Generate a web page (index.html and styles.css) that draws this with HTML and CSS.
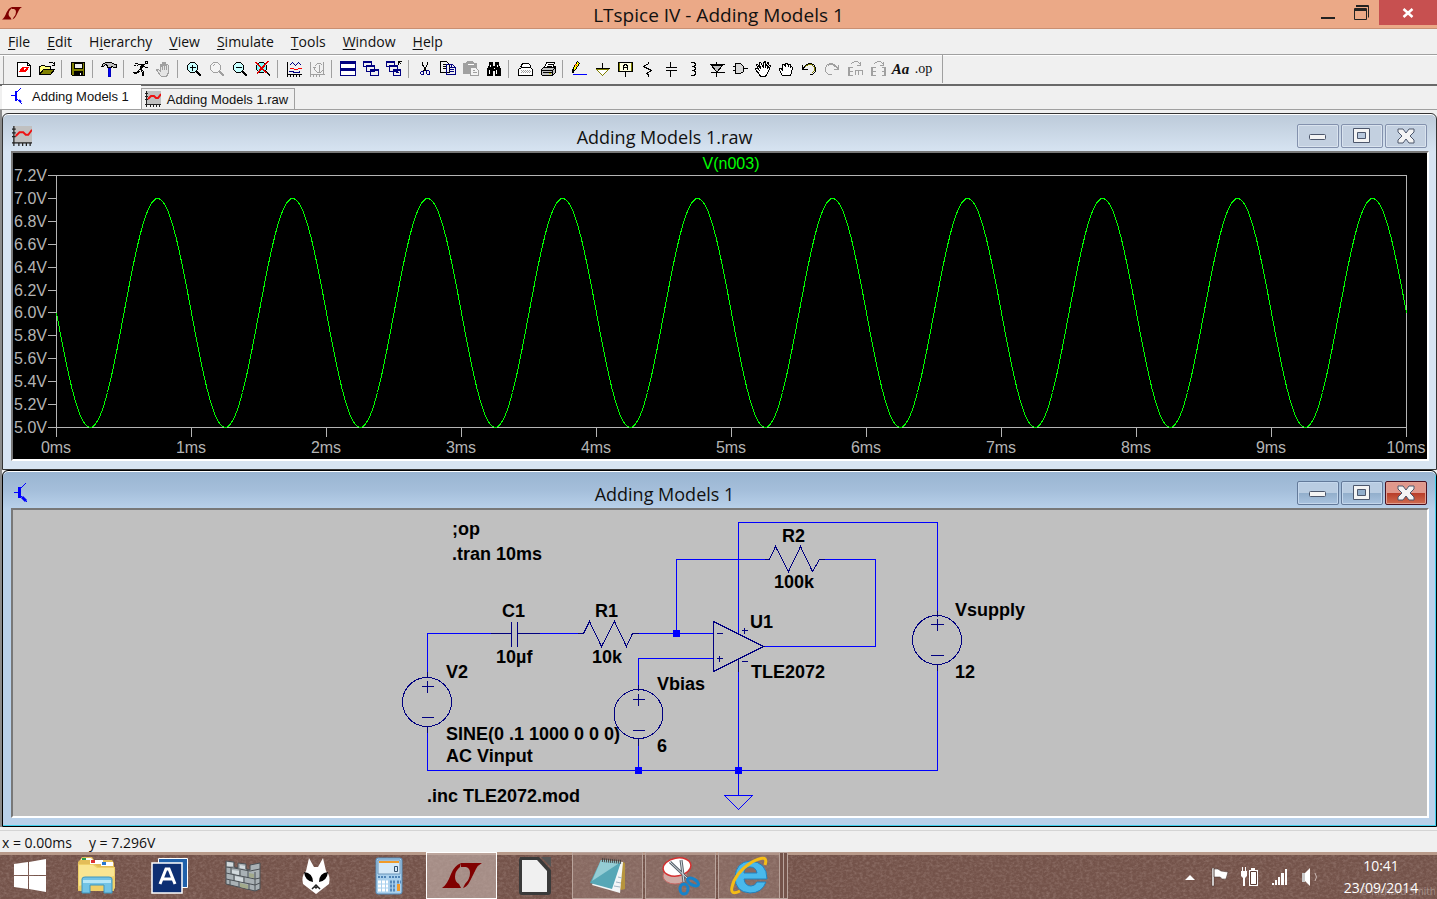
FILE: index.html
```
<!DOCTYPE html>
<html lang="en">

<head>
    <meta charset="UTF-8">
    <meta name="viewport" content="width=device-width, initial-scale=1.0">
    <title>LTspice IV - Adding Models 1</title>
    <link rel="stylesheet" href="styles.css">
</head>

<body>
    <header class="titlebar">
        <svg class="app-logo" width="20" height="13" viewBox="0 0 40 26" fill="#800000">
            <path d="M0 25Q5 22 9 11Q12 3 19 0L18 4Q13 8 13 14Q13 19 17 21L19 25ZM19 0H40Q36 2 34 6L28 18Q25 24 21 25L23 21Q28 16 28 10Q28 5 24 4L19 4Z" />
        </svg>
        <h1>LTspice IV - Adding Models 1</h1>
        <div class="title-buttons">
            <button aria-label="Minimize"><svg width="16" height="16" viewBox="0 0 16 16"><path d="M1 12h14v2H1z" fill="#222" /></svg></button>
            <button aria-label="Restore"><svg width="16" height="16" viewBox="0 0 16 16" fill="none" stroke="#222"><path d="M.5 3.500h12v11H.5zM.5 4.500h12M.5 5.500h12M2 .5h12.500v12M2 1.500h12" /></svg></button>
            <button class="close" aria-label="Close"><svg width="12" height="10" viewBox="0 0 12 10" stroke="#fff" stroke-width="2.500"><path d="M1.500 1l9 8M10.500 1l-9 8" /></svg></button>
        </div>
    </header>

    <nav class="menubar">
        <button><u>F</u>ile</button>
        <button><u>E</u>dit</button>
        <button>H<u>i</u>erarchy</button>
        <button><u>V</u>iew</button>
        <button><u>S</u>imulate</button>
        <button><u>T</u>ools</button>
        <button><u>W</u>indow</button>
        <button><u>H</u>elp</button>
    </nav>

    <div class="toolbar">
        <button aria-label="New schematic"><svg class="icon" viewBox="-.5 -.5 16 16"><path d="M1 1h10l3 3v11H1z" fill="#fff" stroke="#000" /><path d="M11 1v3h3" stroke="#000" /><path d="M3 10l3-4h2l-2 3h1l-1 1zM9 6h3l-3 4H7l2-1l1-2z" fill="#f00" stroke="#f00" /></svg></button>
        <button aria-label="Open"><svg class="icon" viewBox="-.5 -.5 16 16"><path d="M0 13V5h1l1-1h3l1 1h5v3" fill="#ffff80" stroke="#000" /><path d="M0 13l4-5h11l-4 5z" fill="#808000" stroke="#000" /><path d="M9 2l1-1h3l2 2M15 0v4h-3" stroke="#000" /></svg></button>
        <span class="sep"></span>
        <button aria-label="Save"><svg class="icon" viewBox="-.5 -.5 16 16"><path d="M1 1h13v13H2l-1-1z" fill="#808000" stroke="#000" /><path d="M4 2h8v5H4z" fill="#efefef" stroke="#000" /><path d="M4 10h8v4H4z" fill="#000" stroke="#000" /><path d="M10 11v2" stroke="#fff" /></svg></button>
        <span class="sep"></span>
        <button aria-label="Control panel"><svg class="icon" viewBox="-.5 -.5 16 16"><path d="M0 5l2-3l3-1h5l3 2h2v3h-3l-1-1h-1v1H6V4L4 3L2 5z" fill="#c0c0c0" stroke="#000" /><path d="M7 7h2v8H7z" fill="#00f" stroke="#0000c0" /></svg></button>
        <span class="sep"></span>
        <button aria-label="Run"><svg class="icon" viewBox="-.5 -.5 16 16" stroke="#000"><path d="M13 0h2v2h-2zM12 3L8 8M11 3L7 8M10 3L7 6M10 3H6L4 5M12 5l1 1h2M9 8l2 2v3l-1 2M8 8l2 3v3M7 8l-3 3H0M8 9l-4 3H1M2 2h3M1 4h2" /></svg></button>
        <button aria-label="Halt"><svg class="icon" viewBox="-.5 -.5 16 16" stroke="#a0a0a0"><path d="M5 14l-3-4l-1-2h2l2 2V3h1l1 5V1h1l1 7V1h1l1 7V3h1l1 1v7l-2 4H6z" fill="#e4e4e4" /></svg></button>
        <span class="sep"></span>
        <button aria-label="Zoom in"><svg class="icon" viewBox="-.5 -.5 16 16"><path d="M4 1h4l3 3v4l-3 3H4L1 8V4z" fill="#c8ffff" stroke="#000" /><path d="M3 6h6M6 3v6M10 10l5 5M11 10l4 4M10 11l4 4" stroke="#000" /></svg></button>
        <button aria-label="Pan"><svg class="icon" viewBox="-.5 -.5 16 16" stroke="#a0a0a0"><path d="M4 1h4l3 3v4l-3 3H4L1 8V4z" fill="#f4f4f4" /><path d="M3 5l2-2M10 10l5 5M11 10l4 4M10 11l4 4" /></svg></button>
        <button aria-label="Zoom out"><svg class="icon" viewBox="-.5 -.5 16 16"><path d="M4 1h4l3 3v4l-3 3H4L1 8V4z" fill="#c8ffff" stroke="#000" /><path d="M3 6h6M10 10l5 5M11 10l4 4M10 11l4 4" stroke="#000" /></svg></button>
        <button aria-label="Zoom to fit"><svg class="icon" viewBox="-.5 -.5 16 16"><path d="M4 1h4l3 3v4l-3 3H4L1 8V4z" fill="#80ffff" stroke="#000" /><path d="M10 10l5 5M11 10l4 4" stroke="#000" /><path d="M0 1l11 11M1 1l11 11M12 0L1 12M13 0L1 13" stroke="#e00000" /></svg></button>
        <span class="sep"></span>
        <button aria-label="Autorange"><svg class="icon" viewBox="-.5 -.5 16 16"><path d="M1 0v15M0 3h1M0 6h1M0 9h1M0 13h15M4 13v2M7 13v2M10 13v2M13 13v2" stroke="#000" /><path d="M3 4l3-3l3 3l3-3l3 3M2 10h4l2 1h4l2-1" stroke="#000080" /><path d="M3 7h4l1 1h3l1-1h3" stroke="#f00" /></svg></button>
        <button aria-label="Plot settings"><svg class="icon" viewBox="-.5 -.5 16 16" stroke="#a0a0a0"><path d="M1 0v15M0 3h1M0 6h1M0 9h1M0 13h15M4 13v2M7 13v2M10 13v2M14 0v12M5 5l3-3h3l2 2M5 5v3l3 3h3l2-2M3 6h3M10 3v7" /></svg></button>
        <span class="sep"></span>
        <button aria-label="Tile windows"><svg class="icon" viewBox="-.5 -.5 16 16" stroke="#000080"><path d="M0 0h15v7H0zM0 7h15v7H0z" fill="#fff" /><path d="M0 1h15M0 2h15M0 8h15M0 9h15" /></svg></button>
        <button aria-label="Cascade windows"><svg class="icon" viewBox="-.5 -.5 16 16" stroke="#000080" fill="#fff"><path d="M0 0h8v5H0zM0 1h8M3 4h8v6H3zM3 5h8M7 8h8v6H7zM7 9h8" /></svg></button>
        <button aria-label="Close all windows"><svg class="icon" viewBox="-.5 -.5 16 16" stroke="#000080" fill="#fff"><path d="M0 0h8v5H0zM0 1h8M3 4h8v6H3zM3 5h8M7 8h7v6H7zM7 9h7M9 11h3" /><path d="M12 0h3M12 0v3M12 0l3 3" stroke="#000" /></svg></button>
        <span class="sep"></span>
        <button aria-label="Cut"><svg class="icon" viewBox="-.5 -.5 16 16"><path d="M5 0v3l4 7M10 0v3L6 10" stroke="#000" /><path d="M4 10h2v3H4l-1-1v-1zM9 9h2l1 1v3h-2l-1-1z" stroke="#000080" /></svg></button>
        <button aria-label="Copy"><svg class="icon" viewBox="-.5 -.5 16 16" fill="#fff"><path d="M0 0h6l3 3v8H0z" stroke="#000" /><path d="M2 3h3M2 5h4M2 7h4" stroke="#000" /><path d="M6 3h6l3 3v7H6z" stroke="#000080" /><path d="M8 6h3M8 8h5M8 10h5M11 3v3h3" stroke="#000080" /></svg></button>
        <button aria-label="Paste"><svg class="icon" viewBox="-.5 -.5 16 16"><path d="M0 2h3l1-2h5l1 2h3v10H0z" fill="#a0a0a0" stroke="#a0a0a0" /><path d="M4 3h6" stroke="#fff" /><path d="M7 6h5l3 3v5H7z" fill="#f4f4f4" stroke="#a0a0a0" /><path d="M9 9h2M9 11h4" stroke="#a0a0a0" /></svg></button>
        <button aria-label="Find"><svg class="icon" viewBox="-.5 -.5 16 16"><path d="M3 1h3v4h3V1h3v3l2 4v6h-5V9H6v5H1V8l2-4z" fill="#000" stroke="#000" /><path d="M4 3v2M3 8v4M11 3v2M10 8v4M7 7h1" stroke="#fff" /></svg></button>
        <span class="sep"></span>
        <button aria-label="Print setup"><svg class="icon" viewBox="-.5 -.5 16 16" stroke="#000"><path d="M3 6l2-4h6l2 2v3" fill="#fff" /><path d="M1 8l3-2h9l2 2v6H1z" fill="#fff" /><path d="M3 9h10M3 11h10M4 10h9" stroke="#a0a0a0" stroke-dasharray="1 1" /></svg></button>
        <button aria-label="Print"><svg class="icon" viewBox="-.5 -.5 16 16" stroke="#000"><path d="M4 6l2-5h8l-2 6" fill="#fff" /><path d="M7 3h5M6 5h5" /><path d="M1 8l2-2h10l2-1v6l-3 3H2l-1-1z" fill="#c0c0c0" /><path d="M1 9h11v5M12 9l3-3M2 11h9" /><path d="M8 12h2" stroke="#cc0" /></svg></button>
        <span class="sep"></span>
        <button aria-label="Wire"><svg class="icon" viewBox="-.5 -.5 16 16"><path d="M1 11l1-5l4-6l2 2l-4 6z" fill="#ff0" stroke="#000" /><path d="M4 3l2 2" stroke="#f00" /><path d="M1 11l1-3" stroke="#000" stroke-width="2" /><path d="M1 13h14" stroke="#00f" /></svg></button>
        <button aria-label="Ground"><svg class="icon" viewBox="-.5 -.5 16 16"><path d="M2 8h12l-6 6z" fill="#fff" stroke="#808000" /><path d="M8 1v6M1 7h14" stroke="#000" /></svg></button>
        <button aria-label="Label net"><svg class="icon" viewBox="-.5 -.5 16 16"><path d="M2 1h12v9H2z" fill="#ffffe0" stroke="#808000" /><path d="M1 1h14v9H1zM8 10v5M6 8V5l1-2h2l1 2v3M6 6h4" stroke="#000" /></svg></button>
        <button aria-label="Resistor"><svg class="icon" viewBox="-.5 -.5 16 16" stroke="#000"><path d="M8 0v2l-5 3l8 4l-5 3l2 1v2" /></svg></button>
        <button aria-label="Capacitor"><svg class="icon" viewBox="-.5 -.5 16 16" stroke="#000"><path d="M7 0v6M2 6h11M2 9h11M7 9v6" /></svg></button>
        <button aria-label="Inductor"><svg class="icon" viewBox="-.5 -.5 16 16" stroke="#000"><path d="M4 1h3l2 1v2L7 5H5M7 5l2 1v2L7 9H5M7 9l2 1v3l-2 1H4" /></svg></button>
        <button aria-label="Diode"><svg class="icon" viewBox="-.5 -.5 16 16" stroke="#000"><path d="M2 4h11l-5 6H7z" fill="#c0c0c0" /><path d="M7 0v4M0 3h15M1 11h14M7 11v4" /></svg></button>
        <button aria-label="Component"><svg class="icon" viewBox="-.5 -.5 16 16" stroke="#000"><path d="M3 2h5l3 3v5l-3 2H3z" fill="#d8d8d8" /><path d="M0 5h3M0 9h3M11 7h4" /></svg></button>
        <button aria-label="Move"><svg class="icon" viewBox="-.5 -.5 16 16" stroke="#000"><path d="M4 13L0 8V7h2l2 2L1 4V3h1l3 4L4 1h1l3 5V1l2-1v6l2-5h1l-1 6l2-3h1l-2 6l-3 5H5z" fill="#fff" /></svg></button>
        <button aria-label="Drag"><svg class="icon" viewBox="-.5 -.5 16 16" stroke="#000"><path d="M4 14l-3-5V7h2l1 2V3h2l1 2V2h2l1 3V3h2v3l1-1l1 1l-1 5l-1 3z" fill="#fff" /></svg></button>
        <button aria-label="Undo"><svg class="icon" viewBox="-.5 -.5 16 16"><path d="M1 3v5h5M1 8l3-4l3-2h3l3 2l1 3v3l-3 3H8" stroke="#000" /><path d="M4 5l3-2h3l3 3v3l-3 3" stroke="#808000" /></svg></button>
        <button aria-label="Redo"><svg class="icon" viewBox="-.5 -.5 16 16" stroke="#a0a0a0"><path d="M14 3v5H9M14 8l-3-4l-3-2H5L2 4L1 7v3l3 3h3M12 6L8 3H5L3 5" /></svg></button>
        <button aria-label="Rotate"><svg class="icon" viewBox="-.5 -.5 16 16" stroke="#a0a0a0"><path d="M5 6H1v8h4M1 10h4M2 6v8M8 13V9h7v4M11 9v4M4 2l3-2h3l3 3M13 0v4H9" /></svg></button>
        <button aria-label="Mirror"><svg class="icon" viewBox="-.5 -.5 16 16" stroke="#a0a0a0"><path d="M5 6H1v8h4M1 10h4M2 6v8M11 6h4v8h-4M15 10h-4M14 6v8M4 2l3-2h3l3 3M13 0v4H9" /></svg></button>
        <button class="glyph" aria-label="Text">Aa</button>
        <button class="glyph op" aria-label="SPICE directive">.op</button>
        <span class="sep end"></span>
    </div>

    <div class="tabs">
        <button class="tab active">
            <svg width="20" height="20" viewBox="0 0 20 20" stroke="#00f" fill="none"><path d="M5 9.500h5M15 2l-5 5M10 12l6 6" /><path d="M10 5v10M13 14l2 2" stroke-width="2" /></svg>
            Adding Models 1
        </button>
        <button class="tab">
            <svg width="16" height="16" viewBox="0 0 16 16"><path d="M1 0h15v14H1z" fill="#c0c0c0" /><path d="M1.500 0v16M0 13.500h16M0 2.500h3M0 5.500h3M0 8.500h3M5.500 13v3M8.500 13v3M11.500 13v3M14.500 13v3" stroke="#222" /><path d="M3 8l3-3h3l2 2h2l3-4" stroke="#e11" stroke-width="2" fill="none" /></svg>
            Adding Models 1.raw
        </button>
    </div>

    <main class="mdi">
        <section class="window">
            <div class="window-title">
                <svg width="20" height="20" viewBox="0 0 16 16"><path d="M1 0h15v14H1z" fill="#c0c0c0" /><path d="M1.500 0v16M0 13.500h16M0 2.500h3M0 5.500h3M0 8.500h3M5.500 13v3M8.500 13v3M11.500 13v3M14.500 13v3" stroke="#222" /><path d="M3 8l3-3h3l2 2h2l3-4" stroke="#e11" stroke-width="1.500" fill="none" /></svg>
                <h2>Adding Models 1.raw</h2>
                <div class="window-buttons">
                    <button aria-label="Minimize"><svg width="18" height="16" viewBox="0 0 18 16"><rect x=".5" y="6.500" width="16" height="5" rx="1" fill="#f4f4f4" stroke="#4c566b" /></svg></button>
                    <button aria-label="Maximize"><svg width="18" height="16" viewBox="0 0 18 16" stroke="#4c566b"><path d="M.5 .5h16v14H.5z" fill="#f4f4f4" /><path d="M4.500 4.500h8v6h-8z" fill="#b8c8dc" /></svg></button>
                    <button aria-label="Close"><svg width="18" height="16" viewBox="0 0 18 16"><path d="M1 1h5l3 4l3-4h5v3l-4 4l4 4v3h-5l-3-4l-3 4H1v-3l4-4l-4-4z" fill="#f4f4f4" stroke="#4c566b" /></svg></button>
                </div>
            </div>
            <div class="client plot-area">
                <svg class="plot" id="plot"></svg>
            </div>
        </section>

        <section class="window focused">
            <div class="window-title">
                <svg width="20" height="20" viewBox="0 0 20 20" stroke="#00f" fill="none"><path d="M2 9.500h5M14 0L8 6M8 12l7 7" /><path d="M7.500 4v11" stroke-width="3" /><path d="M10 14l4 4" stroke-width="3" /></svg>
                <h2>Adding Models 1</h2>
                <div class="window-buttons">
                    <button aria-label="Minimize"><svg width="18" height="16" viewBox="0 0 18 16"><rect x=".5" y="6.500" width="16" height="5" rx="1" fill="#f4f4f4" stroke="#4c566b" /></svg></button>
                    <button aria-label="Maximize"><svg width="18" height="16" viewBox="0 0 18 16" stroke="#4c566b"><path d="M.5 .5h16v14H.5z" fill="#f4f4f4" /><path d="M4.500 4.500h8v6h-8z" fill="#92aecb" /></svg></button>
                    <button class="close" aria-label="Close"><svg width="18" height="16" viewBox="0 0 18 16"><path d="M1 1h5l3 4l3-4h5v3l-4 4l4 4v3h-5l-3-4l-3 4H1v-3l4-4l-4-4z" fill="#f4f4f4" stroke="#4c566b" /></svg></button>
                </div>
            </div>
            <div class="client">
                <svg class="schematic">
                    <!-- wires -->
                    <g class="wire" transform="translate(.5 .5)">
                        <path d="M414 161V123H477M526 123H570M619 123H700M663 123V49H751M811 49H862V136H750" />
                        <path d="M725 123V12H924V100M700 148H625V174M725 161V285M924 160V260H414V222M625 235V260" />
                        <path d="M711 285H739L725 299Z" />
                    </g>
                    <!-- parts -->
                    <g class="part" transform="translate(.5 .5)">
                        <path d="M477 123H498M498 111V136M504 111V136M504 123H526" />
                        <path d="M564 123H570L576 111L588 136L601 111L613 136L619 123H625" />
                        <path d="M751 49H756L762 36L775 61L787 36L799 61L806 49H811" />
                        <path d="M700 111V161L750 136ZM703 123h6M703 148h6M706 145v6M728 120h6M731 117v6M728 151h6M725 149v12" />
                        <circle cx="413.5" cy="191.5" r="24.5" />
                        <path d="M414 161v6M414 216v6M408 176h12M414 170v12M408 207h12" />
                        <circle cx="625" cy="203.5" r="24.5" />
                        <path d="M625 174v6M625 228v7M619 189h12M625 183v12M619 220h12" />
                        <circle cx="923.5" cy="129.500" r="24.500" />
                        <path d="M924 100v6M924 154v6M917 114h13M924 108v12M917 145h13" />
                    </g>
                    <!-- junctions -->
                    <g class="junction">
                        <rect x="660" y="120" width="7" height="7" />
                        <rect x="622" y="257" width="7" height="7" />
                        <rect x="722" y="257" width="7" height="7" />
                    </g>
                    <g class="label">
                        <text x="439" y="25">;op</text>
                        <text x="439" y="50">.tran 10ms</text>
                        <text x="489" y="107">C1</text>
                        <text x="483" y="153">10µf</text>
                        <text x="582" y="107">R1</text>
                        <text x="579" y="153">10k</text>
                        <text x="433" y="168">V2</text>
                        <text x="433" y="230">SINE(0 .1 1000 0 0 0)</text>
                        <text x="433" y="252">AC Vinput</text>
                        <text x="414" y="292">.inc TLE2072.mod</text>
                        <text x="644" y="180">Vbias</text>
                        <text x="644" y="242">6</text>
                        <text x="769" y="32">R2</text>
                        <text x="761" y="78">100k</text>
                        <text x="737" y="118">U1</text>
                        <text x="738" y="168">TLE2072</text>
                        <text x="942" y="106">Vsupply</text>
                        <text x="942" y="168">12</text>
                    </g>
                </svg>
            </div>
        </section>
    </main>

    <div class="status">
        <span>x = 0.00ms</span>
        <span>y = 7.296V</span>
    </div>

    <footer class="taskbar">
        <svg class="grain" aria-hidden="true">
            <filter id="grain">
                <feTurbulence type="fractalNoise" baseFrequency=".3 .4" numOctaves="3" seed="4" />
                <feColorMatrix values="0 0 0 0 .9  0 0 0 0 .75  0 0 0 0 .7  1.2 0 0 0 -.45" />
            </filter>
            <rect width="100%" height="100%" filter="url(#grain)" />
        </svg>
        <button class="start" aria-label="Start"><svg width="32" height="34" viewBox="0 0 32 34" fill="#fff"><path d="M0 5l14-2v13H0zM15 3l17-3v16H15zM0 17h14v13L0 28zM15 17h17v16l-17-3z" /></svg></button>
        <button class="task" aria-label="File Explorer">
            <svg width="40" height="40" viewBox="0 0 40 40">
                <path d="M3 4l2-3h10l2 3h18l2 3v28H1V6z" fill="#e3bd58" />
                <path d="M5 2h9l2 2H4z" fill="#fff" /><path d="M5 2h4v2H5z" fill="#2a9d4c" />
                <path d="M13 4h13v4H13z" fill="#fff" /><path d="M14 4h4v3h-4z" fill="#d33" />
                <path d="M24 6h12v4H24z" fill="#fff" /><path d="M25 6h4v3h-4z" fill="#2878d0" />
                <path d="M1 8h16l4 3h17v21l-2 3H3l-2-2z" fill="#efcf68" /><path d="M2 9h14l4 3h17v8L2 30z" fill="#f9e591" />
                <path d="M5 23q0-2 3-2h24q3 0 3 2v14h-8v-8H13v8H5z" fill="#72c3e5" stroke="#3f95bd" />
                <path d="M6 24h28v3H6z" fill="#b5e6f7" />
            </svg>
        </button>
        <button class="task" aria-label="Acronis">
            <svg width="38" height="38" viewBox="0 0 38 38">
                <path d="M7.500 1.500h29v29h-29z" fill="#1f61ab" stroke="#fff" />
                <path d="M1 6h30v30H1z" fill="#0d2f73" stroke="#fff" stroke-width="1.500" />
                <path d="M9 27l6-15h3l6 15M11 22h11" stroke="#fff" stroke-width="3" fill="none" />
            </svg>
        </button>
        <button class="task" aria-label="Firewall">
            <svg width="36" height="32" viewBox="0 0 36 32" stroke="#4b5055">
                <path d="M1 1l8 1v5l4 1V3l8 1v5l4 1V5l10-2v26l-5 2L1 24z" fill="#a9b1b5" />
                <path d="M1 7l8 1l16 3l10-2M1 13l29 6l5-1M1 19l29 6l5-2M30 12v19M6 8v6M15 10v6M23 11v7M9 15v6M19 17v6M5 20v5M14 22v5M24 24v6" fill="none" />
                <path d="M2 2l6 1v3L2 6zM15 5l5 1v3l-5-1zM10 16l8 2v4l-8-2zM7 10l7 1v4l-7-2z" fill="#d3dadd" stroke="none" />
                <path d="M24 13l5 1v4l-5-1zM15 23l8 2v4l-8-2z" fill="#a2aa8c" stroke="none" />
            </svg>
        </button>
        <button class="task" aria-label="foobar2000">
            <svg width="30" height="38" viewBox="0 0 30 38">
                <path d="M8 1l5 9h4l5-9l3 13q5 5 3 13L15 37L2 27Q0 19 5 14z" fill="#fff" />
                <path d="M3 15q9 1 9 10Q4 24 3 15zM27 15q-9 1-9 10q8-1 9-10z" />
                <path d="M11 32l4-4l4 4M13 29l2 2l2-2" stroke="#222" stroke-width="1.500" fill="none" />
            </svg>
        </button>
        <button class="task" aria-label="Calculator">
            <svg width="28" height="38" viewBox="0 0 28 38">
                <rect x="1" y="1" width="26" height="36" rx="2" fill="#a9d0ed" stroke="#5289b6" />
                <path d="M3 3h22v14H3z" fill="#d5e9f8" stroke="#6a94b9" /><path d="M4 5h20" stroke="#f09b2a" stroke-width="2" />
                <path d="M19.500 9.500h3v5h-3z" fill="none" stroke="#33506e" />
                <path d="M3 20h9M14 20h12" stroke="#4e83b5" stroke-width="2" stroke-dasharray="2 1" />
                <path d="M3 25h10M3 29h10M3 33h10" stroke="#fff" stroke-width="3" stroke-dasharray="3 1" />
                <path d="M15 25h6M15 29h6M15 33h6M22 25h4" stroke="#5689bb" stroke-width="3" stroke-dasharray="2 1" />
                <path d="M22 27h3v7h-3z" fill="#f09a2a" />
            </svg>
        </button>
        <button class="task active" aria-label="LTspice IV">
            <svg width="40" height="26" viewBox="0 0 40 26" fill="#800000"><path d="M0 25Q5 22 9 11Q12 3 19 0L18 4Q13 8 13 14Q13 19 17 21L19 25ZM19 0H40Q36 2 34 6L28 18Q25 24 21 25L23 21Q28 16 28 10Q28 5 24 4L19 4Z" /></svg>
        </button>
        <button class="task" aria-label="LibreOffice">
            <svg width="34" height="40" viewBox="0 0 34 40"><path d="M2 1h19l12 13v22q0 3-3 3H4q-3 0-3-3V4z" fill="#3a3a3a" /><path d="M23 1h10v10z" fill="#555" /><path d="M4 4h15l10 11v21H4z" fill="#f0f0f0" /></svg>
        </button>
        <button class="task open" aria-label="Notepad">
            <svg width="38" height="38" viewBox="0 0 38 38">
                <path d="M14 3l20 2l2 1v26l-4 1z" fill="#b6943d" /><path d="M14 3l20 2l-3 31L3 28z" fill="#f3f6f7" />
                <path d="M12 3l20 2l-9 27L1 26z" fill="#56a7b6" /><path d="M12 3l20 2L3 24z" fill="#94cdd5" />
                <path d="M13 3l20 2" stroke="#444" stroke-width="4" stroke-dasharray="1 1" />
                <path d="M27 25l5 1M25 29l6 1M29 20l4 1" stroke="#a3b6c4" />
            </svg>
        </button>
        <button class="task open" aria-label="Snipping Tool">
            <svg width="38" height="40" viewBox="0 0 38 40">
                <ellipse cx="13" cy="20" rx="12" ry="8" fill="#cfaaa4" stroke="#c76a66" />
                <ellipse cx="15" cy="11" rx="14" ry="9" fill="#fff" stroke="#d63030" stroke-width="1.500" transform="rotate(-10 15 11)" />
                <path d="M8 6l18 17M19 4l3 22" stroke="#59636c" stroke-width="3" /><path d="M8 6l18 17M19 4l3 22" stroke="#d9e0e5" />
                <ellipse cx="22" cy="33" rx="4" ry="5" fill="none" stroke="#1683ca" stroke-width="3" />
                <ellipse cx="31" cy="26" rx="6" ry="3" fill="none" stroke="#1683ca" stroke-width="3" transform="rotate(30 31 26)" />
            </svg>
        </button>
        <button class="task open stacked" aria-label="Internet Explorer">
            <svg width="40" height="40" viewBox="0 0 40 40" fill="none">
                <path d="M37 26q-4 11-16 11Q6 36 6 21Q7 6 21 5q17 1 17 18H15q1 7 7 7q4 0 6-4z" fill="#49b9ec" stroke="#2380bd" />
                <path d="M15 17h13q-1-6-7-6t-6 6z" fill="#8a6a61" stroke="#2380bd" />
                <path d="M11 35q-10 5-8-4Q6 17 23 6Q40-3 36 9" stroke="#f5bd16" stroke-width="3" />
            </svg>
        </button>
        <div class="tray">
            <button aria-label="Show hidden icons"><svg width="10" height="6" viewBox="0 0 10 6"><path d="M0 6l5-5l5 5z" fill="#fff" /></svg></button>
            <button aria-label="Action Center"><svg width="20" height="20" viewBox="0 0 20 20" fill="#fff" stroke="#3b2a26" stroke-width=".5"><path d="M2 1h2v18H2zM4 2q4-1 7 2l7 1l-2 7q-4 1-6-2H4z" /></svg></button>
            <button aria-label="Power"><svg width="20" height="20" viewBox="0 0 20 20"><path d="M2 0h1v4H2zM5 0h1v4H5zM1 4h6v5L5 11v8H3v-8L1 9zM11 1h4v2h3v16H9V3h2z" fill="#fff" /><path d="M10.500 4.500h6v13h-6z" stroke="#5a3c35" fill="#fff" /></svg></button>
            <button aria-label="Network"><svg width="16" height="18" viewBox="0 0 16 18" fill="#fff"><path d="M0 15h2v2H0zM3 12h2v5H3zM6 9h2v8H6zM9 5h3v12H9zM13 1h2v16h-2z" /></svg></button>
            <button aria-label="Volume"><svg width="18" height="20" viewBox="0 0 18 20"><path d="M1 6h3v9H1z" fill="#c9c9c9" /><path d="M4 6l5-5v18l-5-5z" fill="#fff" /><path d="M14 6q3 4 0 8" stroke="#c8b5b0" fill="none" /></svg></button>
        </div>
        <div class="clock">
            <time>10:41</time>
            <time>23/09/2014</time>
            <small>© Richard Smith</small>
        </div>
    </footer>

    <script src="script.js"></script>
</body>

</html>
```
FILE: styles.css
```
* {
    box-sizing: border-box;
}

body {
    margin: 0;
    background-color: #f0f0f0;
    color: #111;
    font-family: "Open Sans", "Segoe UI", sans-serif;
    font-size: 14px;
    overflow-x: hidden;
}

button {
    margin: 0;
    padding: 0;
    border: none;
    background: none;
    color: inherit;
    font: inherit;
}

svg {
    display: block;
    flex: none;
}

h1,
h2 {
    margin: 0;
    font-size: 18px;
    font-weight: normal;
    line-height: 24px;
}

/* main window */
.titlebar {
    display: grid;
    grid-template-columns: 1fr auto 1fr;
    height: 29px;
    background-color: #eba987;
    border-bottom: 1px solid #c98f72;
}

.titlebar h1 {
    padding-top: 3px;
    font-size: 19px;
}

.app-logo {
    margin: 7px 0 0 2px;
}

.title-buttons {
    display: flex;
    justify-content: flex-end;
}

.title-buttons button {
    display: flex;
    justify-content: center;
    align-items: center;
    width: 34px;
    height: 25px;
}

.title-buttons .close {
    width: 58px;
    background-color: #c75050;
}

.menubar {
    display: flex;
    gap: 17px;
    height: 26px;
    padding-left: 8px;
    border-bottom: 1px solid #a0a0a0;
}

.menubar u {
    text-underline-offset: 2px;
}

.toolbar {
    display: flex;
    align-items: center;
    height: 31px;
    padding: 0 0 2px 12px;
    border-top: 1px solid #fff;
    border-bottom: 2px solid #696969;
    box-shadow: inset 3px 0 #f0f0f0, inset 4px 0 #a0a0a0;
}

.toolbar button {
    display: flex;
    justify-content: center;
    align-items: center;
    width: 23px;
    height: 24px;
}

.icon {
    width: 16px;
    height: 16px;
    fill: none;
    shape-rendering: crispEdges;
}

.sep {
    width: 8px;
    height: 18px;
    border-left: 1px solid #a0a0a0;
    margin: 0 -3px 0 3px;
}

.sep.end {
    height: 28px;
    margin-left: 7px;
}

.toolbar .glyph {
    font: italic bold 15px "Liberation Serif", serif;
}

.toolbar .op {
    font: 14px "Liberation Serif", serif;
}

.tabs {
    display: flex;
    align-items: flex-end;
    height: 24px;
    padding-left: 2px;
    border-bottom: 1px solid #a0a0a0;
}

.tab {
    display: flex;
    align-items: center;
    gap: 6px;
    height: 21px;
    padding: 0 6px 0 3px;
    border: 1px solid #a0a0a0;
    border-bottom: none;
    font: 13px "Liberation Sans", Arial, sans-serif;
}

.tab.active {
    height: 24px;
    padding: 0 12px 2px 4px;
    background-color: #fff;
    border: none;
}

/* child windows */
.mdi {
    padding: 3px 0 0 2px;
    background-color: #f0f0f0;
    border-bottom: 3px solid #f0f0f0;
    box-shadow: inset 2px 0 #8a8a8a;
}

.window {
    padding: 0 7px 8px 8px;
    background-color: #d7e4f2;
    border: 1px solid #333;
    border-radius: 6px 6px 0 0;
    box-shadow: inset 0 1px #fff;
    background-image: linear-gradient(#bccad9, #d7e4f2 38px);
}

.window.focused {
    background-color: #b9d1ea;
    background-image: linear-gradient(#99b4d1, #a5bfdb 20px, #b9d1ea 38px);
    border-color: #000;
    box-shadow: inset 0 1px #fff, inset -1px -1px #41d0ee;
}

.window-title {
    display: flex;
    align-items: center;
    height: 37px;
    padding: 8px 2px 0 1px;
}

.window-title h2 {
    flex: 1;
    text-align: center;
}

.window-title > svg,
.window-buttons {
    margin-bottom: 2px;
}

.window-buttons {
    display: flex;
    gap: 2px;
}

.window-buttons button {
    display: flex;
    justify-content: center;
    align-items: center;
    width: 42px;
    height: 24px;
    border: 1px solid #8391ad;
    border-radius: 2px;
    box-shadow: inset 0 0 0 1px #d9e3ee;
    background-color: #c3d0e0;
}

.focused .window-buttons button {
    border-color: #637a9a;
    box-shadow: inset 0 0 0 1px #c4d7ec;
    background-image: linear-gradient(#b9cce1 50%, #92aecb 50%, #a9c3df);
}

.focused .window-buttons .close {
    border-color: #4b1020;
    box-shadow: inset 0 0 0 1px #e0a093;
    background-image: linear-gradient(#e0988c 50%, #b83c28 50%, #cf6c50);
}

.client {
    border: 2px solid #fff;
    border-top-color: #787878;
    border-left-color: #787878;
    background-color: #c0c0c0;
}

.plot-area {
    background-color: #000;
}

.plot,
.schematic {
    width: 100%;
    height: 306px;
}

.plot {
    font: 16px "Liberation Sans", Arial, sans-serif;
    fill: #b4b4b4;
}

.plot .axis {
    stroke: #b4b4b4;
    fill: none;
    shape-rendering: crispEdges;
}

.plot .trace {
    stroke: #0f0;
    fill: none;
    shape-rendering: crispEdges;
}

.plot .trace-name {
    fill: #0f0;
}

.wire,
.part {
    fill: none;
    stroke: #00f;
    shape-rendering: crispEdges;
}

.part {
    stroke: #000080;
}

.junction {
    fill: #00f;
}

.label {
    font: bold 18px "Liberation Sans", Arial, sans-serif;
    fill: #000;
}

.status {
    display: flex;
    gap: 17px;
    height: 22px;
    padding-left: 2px;
    border-top: 1px solid #d4d4d4;
    font-size: 14px;
    line-height: 24px;
}

/* taskbar */
.taskbar {
    position: relative;
    display: flex;
    height: 47px;
    background-color: #74534a;
    border-top: 3px solid #b89a8a;
    color: #fff;
}

.grain {
    position: absolute;
    width: 100%;
    height: 100%;
    opacity: 0.3;
}

.start,
.task {
    display: flex;
    justify-content: center;
    align-items: center;
    position: relative;
    width: 71px;
    height: 47px;
    margin: -3px 2px 0 0;
}

.start {
    width: 59px;
}

.task.active {
    background-color: #bfaba5aa;
    border: 1px solid #fff;
}

.task.open {
    background-color: #a58c8466;
    border: 1px solid #b9a49c;
}

.task.stacked {
    width: 70px;
    padding-right: 8px;
    box-shadow: inset -3px 0 #74534a, inset -4px 0 #b9a49c, inset -7px 0 #74534a, inset -8px 0 #b9a49c;
}

.tray {
    position: relative;
    display: flex;
    align-items: center;
    margin-left: auto;
}

.tray button {
    display: flex;
    justify-content: center;
    width: 30px;
}

.clock {
    position: relative;
    display: flex;
    flex-direction: column;
    align-items: center;
    width: 112px;
    line-height: 22px;
}

.clock small {
    position: absolute;
    right: 1px;
    bottom: 0;
    font-size: 10px;
    line-height: 16px;
    color: #ffffff55;
}
```
FILE: script.js
```
const plot = document.getElementById("plot");

// plot margins inside the black area
const left = 43;
const right = 21;
const top_ = 22;
const bottom = 274;

function yOf(volts) {
    return bottom - (volts - 5) / 2.2 * (bottom - top_);
}

function drawPlot() {
    const width = plot.clientWidth;
    const end = width - right;
    const span = end - left;
    let axis = `M${left} ${top_}H${end}V${bottom}H${left}Z`;
    let labels = "";

    for (let i = 0; i <= 11; i++) {
        const v = 5 + i * 0.2;
        const y = Math.round(yOf(v));
        axis += `M${left - 9} ${y}H${left}`;
        labels += `<text x="${left - 9}" y="${y + 6}" text-anchor="end">${v.toFixed(1)}V</text>`;
    }

    for (let ms = 0; ms <= 10; ms++) {
        const x = Math.round(left + span * ms / 10);
        axis += `M${x} ${bottom}v9`;
        labels += `<text x="${x}" y="300" text-anchor="middle">${ms}ms</text>`;
    }

    const points = [];
    for (let x = 0; x <= span; x += 3) {
        const t = x / span * 10;
        points.push(`${left + x},${yOf(6 - Math.sin(2 * Math.PI * t)).toFixed(1)}`);
    }

    plot.innerHTML = `
        <g transform="translate(.5 .5)">
            <path class="axis" d="${axis}" />
            <polyline class="trace" points="${points.join(" ")}" />
        </g>
        ${labels}
        <text class="trace-name" x="${(left + end) / 2}" y="16" text-anchor="middle">V(n003)</text>`;
}

drawPlot();
window.addEventListener("resize", drawPlot);
```
